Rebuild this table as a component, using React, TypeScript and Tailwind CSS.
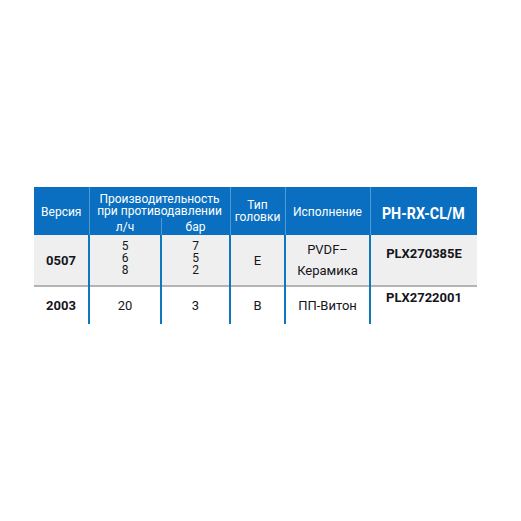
import React from "react";

const font = { fontFamily: '"Roboto", "Liberation Sans", sans-serif' };

export default function App() {
  return (
    <div className="w-[521px] h-[521px] bg-white pt-[187px] pl-[34px]" style={font}>
      <table className="border-collapse text-[12px] leading-[12px]">
        <colgroup>
          <col className="w-[55px]" />
          <col className="w-[72px]" />
          <col className="w-[69px]" />
          <col className="w-[55px]" />
          <col className="w-[85px]" />
          <col className="w-[107px]" />
        </colgroup>
        <thead className="bg-[#0a6fc0] text-white">
          <tr className="h-[31px]">
            <th rowSpan={2} className="font-normal border-r border-[#4d9ad6] align-middle pt-[2px]">Версия</th>
            <th colSpan={2} className="font-normal border-r border-[#4d9ad6] align-bottom pb-[1px]">
              Производительность<br />при противодавлении
            </th>
            <th rowSpan={2} className="font-normal border-r border-[#4d9ad6] align-middle pb-[1px]">Тип<br />головки</th>
            <th rowSpan={2} className="font-normal border-r border-[#4d9ad6] align-middle pt-[2px]">Исполнение</th>
            <th rowSpan={2} className="font-bold text-[17px] leading-[18px] align-middle pt-[4px]">
              <span className="inline-block scale-x-[0.84]">PH-RX-CL/M</span>
            </th>
          </tr>
          <tr className="h-[17px]">
            <th className="font-normal border-r border-[#4d9ad6] align-middle pt-[1px]">л/ч</th>
            <th className="font-normal border-r border-[#4d9ad6] align-middle pt-[1px]">бар</th>
          </tr>
        </thead>
        <tbody className="text-[#151520] text-[13px]">
          <tr className="h-[51px] bg-[#efefef] border-b-2 border-[#b4b4b4]">
            <td className="text-center font-bold border-r-2 border-[#0d78bd] pt-[1px]">0507</td>
            <td className="text-center border-r-2 border-[#0d78bd] text-[12px] leading-[12px] pb-[5px]">5<br />6<br />8</td>
            <td className="text-center border-r-2 border-[#0d78bd] text-[12px] leading-[12px] pb-[5px]">7<br />5<br />2</td>
            <td className="text-center border-r-2 border-[#0d78bd] pt-[1px]">E</td>
            <td className="text-center border-r-2 border-[#0d78bd] leading-[21px] pb-[1px]">PVDF–<br />Керамика</td>
            <td className="text-center font-bold align-top pt-[13px]">PLX270385E</td>
          </tr>
          <tr className="h-[38px] bg-white">
            <td className="text-center font-bold border-r-2 border-[#0d78bd] pt-[1px]">2003</td>
            <td className="text-center border-r-2 border-[#0d78bd]">20</td>
            <td className="text-center border-r-2 border-[#0d78bd] pt-[1px]">3</td>
            <td className="text-center border-r-2 border-[#0d78bd] pt-[1px]">B</td>
            <td className="text-center border-r-2 border-[#0d78bd] pt-[1px]">ПП-Витон</td>
            <td className="text-center font-bold align-top pt-[5px]">PLX2722001</td>
          </tr>
        </tbody>
      </table>
    </div>
  );
}
